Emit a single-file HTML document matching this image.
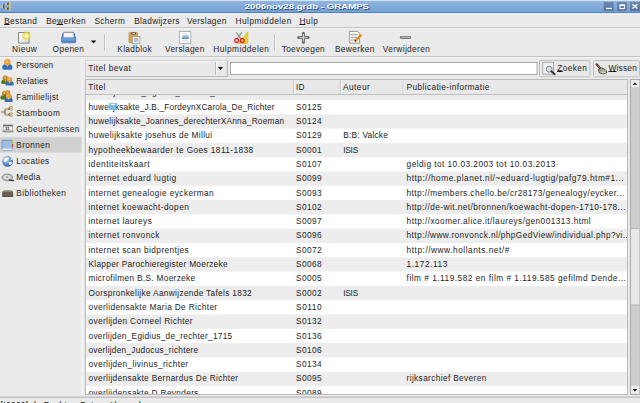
<!DOCTYPE html>
<html><head><meta charset="utf-8"><style>
html,body{margin:0;padding:0;width:640px;height:403px;overflow:hidden;background:#eaeaea}
svg{display:block;font-family:"Liberation Sans",sans-serif}
</style></head><body>
<svg width="640" height="403" viewBox="0 0 640 403">
<rect width="640" height="403" fill="#eaeaea"/>
<defs><linearGradient id="tg" x1="0" y1="0" x2="0" y2="1"><stop offset="0" stop-color="#90b6e1"/><stop offset="1" stop-color="#74a0d3"/></linearGradient><linearGradient id="btn" x1="0" y1="0" x2="0" y2="1"><stop offset="0" stop-color="#6a88ae"/><stop offset="1" stop-color="#56759c"/></linearGradient></defs>
<rect x="0" y="0" width="640" height="1" fill="#d6e4f3"/>
<rect x="0" y="1" width="640" height="11" fill="url(#tg)"/>
<rect x="0" y="12" width="640" height="1" fill="#5282bb"/>
<g stroke="#2a2a2a" stroke-width="0.7" fill="none"><path d="M2.5 6.5H3.9M3.9 4.2V8.6M3.9 4.2H5M3.9 8.6H5M7 4.2H8M8 2.6V5M7 8.6H8M8 7.5V9.6M8 2.6H9M8 5H9M8 7.5H9M8 9.6H9"/></g>
<ellipse cx="1.8" cy="6.5" rx="1.35" ry="0.95" fill="#e6c084"/>
<ellipse cx="5.8" cy="4.2" rx="1.35" ry="0.95" fill="#e6c084"/>
<ellipse cx="5.8" cy="8.6" rx="1.35" ry="0.95" fill="#e6c084"/>
<ellipse cx="9.8" cy="2.6" rx="1.35" ry="0.95" fill="#e6c084"/>
<ellipse cx="9.8" cy="5.0" rx="1.35" ry="0.95" fill="#e6c084"/>
<ellipse cx="9.8" cy="7.5" rx="1.35" ry="0.95" fill="#e6c084"/>
<ellipse cx="9.8" cy="9.7" rx="1.35" ry="0.95" fill="#e6c084"/>
<g transform="translate(245.6 10.3) scale(1.206 1)"><text x="0" y="0" font-size="8" font-weight="bold" fill="#2e4d78">2006nov28.grdb - GRAMPS</text></g>
<g transform="translate(244.7 9.4) scale(1.206 1)"><text x="0" y="0" font-size="8" font-weight="bold" fill="#ffffff">2006nov28.grdb - GRAMPS</text></g>
<rect x="603.7" y="2" width="10" height="9" fill="url(#btn)"/>
<rect x="617" y="2" width="10" height="9" fill="url(#btn)"/>
<rect x="630" y="2" width="10" height="9" fill="url(#btn)"/>
<rect x="606" y="7.8" width="6" height="1.3" fill="#fff"/>
<rect x="620" y="5" width="4.4" height="3.6" fill="none" stroke="#fff" stroke-width="1"/><rect x="619.6" y="4.6" width="5.2" height="1.3" fill="#fff"/>
<path d="M632.3 4.2L637.5 8.6M637.5 4.2L632.3 8.6" stroke="#fff" stroke-width="1.3"/>
<rect x="0" y="13" width="640" height="14" fill="#ebebeb"/>
<rect x="0" y="27" width="640" height="1" fill="#c3c3c3"/>
<rect x="0" y="28" width="640" height="1" fill="#f4f4f4"/>
<text x="4.20" y="23.60" font-size="8.30" fill="#1c1c1c" textLength="32.77" lengthAdjust="spacing">Bestand</text>
<rect x="4.20" y="24" width="5.49" height="1" fill="#1c1c1c"/>
<text x="46.20" y="23.60" font-size="8.30" fill="#1c1c1c" textLength="39.50" lengthAdjust="spacing">Bewerken</text>
<rect x="56.61" y="24" width="6.54" height="1" fill="#1c1c1c"/>
<text x="94.40" y="23.60" font-size="8.30" fill="#1c1c1c" textLength="30.41" lengthAdjust="spacing">Scherm</text>
<text x="134.20" y="23.60" font-size="8.30" fill="#1c1c1c" textLength="45.26" lengthAdjust="spacing">Bladwijzers</text>
<text x="186.90" y="23.60" font-size="8.30" fill="#1c1c1c" textLength="39.43" lengthAdjust="spacing">Verslagen</text>
<text x="235.60" y="23.60" font-size="8.30" fill="#1c1c1c" textLength="55.70" lengthAdjust="spacing">Hulpmiddelen</text>
<text x="299.40" y="23.60" font-size="8.30" fill="#1c1c1c" textLength="18.39" lengthAdjust="spacing">Hulp</text>
<rect x="299.40" y="24" width="6.02" height="1" fill="#1c1c1c"/>
<rect x="0" y="56" width="640" height="1" fill="#c4c4c4"/>
<rect x="0" y="57" width="640" height="1" fill="#f2f2f2"/>
<text x="12.10" y="52.00" font-size="8.30" fill="#1c1c1c" textLength="24.74" lengthAdjust="spacing">Nieuw</text>
<text x="52.60" y="52.00" font-size="8.30" fill="#1c1c1c" textLength="31.36" lengthAdjust="spacing">Openen</text>
<text x="117.30" y="52.00" font-size="8.30" fill="#1c1c1c" textLength="34.28" lengthAdjust="spacing">Kladblok</text>
<text x="165.00" y="52.00" font-size="8.30" fill="#1c1c1c" textLength="39.43" lengthAdjust="spacing">Verslagen</text>
<text x="213.20" y="52.00" font-size="8.30" fill="#1c1c1c" textLength="55.70" lengthAdjust="spacing">Hulpmiddelen</text>
<text x="281.70" y="52.00" font-size="8.30" fill="#1c1c1c" textLength="42.96" lengthAdjust="spacing">Toevoegen</text>
<text x="334.90" y="52.00" font-size="8.30" fill="#1c1c1c" textLength="39.50" lengthAdjust="spacing">Bewerken</text>
<text x="382.70" y="52.00" font-size="8.30" fill="#1c1c1c" textLength="47.16" lengthAdjust="spacing">Verwijderen</text>
<rect x="104.0" y="34" width="1" height="17" fill="#c2c2c2"/><rect x="105.0" y="34" width="1" height="17" fill="#f8f8f8"/>
<rect x="274.0" y="34" width="1" height="17" fill="#c2c2c2"/><rect x="275.0" y="34" width="1" height="17" fill="#f8f8f8"/>
<defs><linearGradient id="docg" x1="0" y1="0" x2="1" y2="1"><stop offset="0" stop-color="#ffffff"/><stop offset="1" stop-color="#d8d8d8"/></linearGradient><radialGradient id="stg"><stop offset="0.4" stop-color="#ffe84a"/><stop offset="1" stop-color="#e8d020" stop-opacity="0.6"/></radialGradient><linearGradient id="blug" x1="0" y1="0" x2="0" y2="1"><stop offset="0" stop-color="#7fb0e6"/><stop offset="1" stop-color="#3f78c0"/></linearGradient></defs>
<rect x="18.5" y="32.5" width="10.6" height="10.6" fill="url(#docg)" stroke="#8a8a8a" stroke-width="1"/>
<circle cx="26.5" cy="35.6" r="4.2" fill="url(#stg)"/>
<path d="M26.5 33.2L27.2 34.9L29 35L27.6 36.1L28.1 37.9L26.5 36.9L24.9 37.9L25.4 36.1L24 35L25.8 34.9Z" fill="#fff"/>
<rect x="63" y="32.3" width="11" height="6.5" rx="1" fill="#f6f6f6" stroke="#7d7d7d" stroke-width="0.9"/>
<path d="M61.5 37.8H75.8V41.6Q75.8 42.8 74.6 42.8H62.7Q61.5 42.8 61.5 41.6Z" fill="url(#blug)" stroke="#3a6aa8" stroke-width="0.6"/>
<path d="M61.8 38.2L63.2 33.5M75.5 38.2L74.1 33.5" stroke="#3a6aa8" stroke-width="1"/>
<path d="M90.8 40.4H96.3L93.55 43.4Z" fill="#111"/>
<rect x="129" y="32.4" width="8.4" height="10.3" rx="0.8" fill="#e1a54c" stroke="#b57a2a" stroke-width="0.6"/>
<rect x="131.2" y="32.4" width="4.8" height="2.2" rx="0.6" fill="#4a4a4a"/><rect x="132.2" y="33" width="2.8" height="0.9" fill="#ddd"/>
<rect x="132.3" y="36.4" width="7.6" height="7" fill="#fafafa" stroke="#8a8a8a" stroke-width="0.7"/>
<rect x="133.8" y="37.8" width="4.5" height="4.3" fill="#bdbdbd"/>
<rect x="179.5" y="31.5" width="11.2" height="12" fill="#fdfdfd" stroke="#b2b2b2" stroke-width="1"/>
<rect x="181.5" y="33" width="7" height="0.6" fill="#d8d8d8"/>
<rect x="182" y="35" width="6.7" height="3.9" fill="#9cc0e6"/><rect x="182" y="37.6" width="6.7" height="1.3" fill="#5f86b8"/><rect x="182.3" y="35.3" width="1.6" height="1.2" fill="#d8e8a0"/>
<rect x="182" y="40.2" width="6.5" height="0.6" fill="#dadada"/><rect x="182" y="41.6" width="6.5" height="0.6" fill="#dadada"/>
<path d="M247.8 31.8V43.6H238.2Z" fill="#f0d030" stroke="#c9a818" stroke-width="0.5"/>
<path d="M236.2 32.3L241.5 39.5M241.8 32.3L236.6 39.5" stroke="#9a9a9a" stroke-width="1.3"/>
<circle cx="236.6" cy="40.6" r="1.9" fill="none" stroke="#e02020" stroke-width="1.3"/><circle cx="242.3" cy="40.6" r="1.9" fill="none" stroke="#e02020" stroke-width="1.3"/>
<path d="M303.4 33.2V42.2M298.6 37.6H308.2" stroke="#6a6a6a" stroke-width="3" stroke-linecap="round"/>
<path d="M303.4 34V41.4M299.4 37.6H307.4" stroke="#d8d8d8" stroke-width="1"/>
<path d="M349.6 31.4H357.6L359.6 33.4V43.1H349.6Z" fill="#f7f7f7" stroke="#8c8c8c" stroke-width="0.9"/>
<rect x="351" y="34.3" width="6.5" height="0.9" fill="#9a9a9a"/>
<rect x="351" y="36.9" width="6.5" height="0.9" fill="#9a9a9a"/>
<rect x="351" y="39.5" width="6.5" height="0.9" fill="#9a9a9a"/>
<path d="M355.4 40.8L360.8 35.4" stroke="#f08a10" stroke-width="2.2" stroke-linecap="round"/><path d="M355 41.2L355.9 40.3" stroke="#333" stroke-width="1.6"/>
<rect x="399.8" y="36" width="11.4" height="2.9" rx="1.4" fill="#7a7a7a"/><rect x="401" y="36.8" width="9" height="0.9" fill="#cfcfcf"/>
<rect x="81.5" y="57" width="1" height="340" fill="#f7f7f7"/>
<rect x="0" y="137.2" width="81.6" height="15.4" fill="#d0d0d0"/>
<text x="16.30" y="67.70" font-size="8.30" fill="#1c1c1c" textLength="36.88" lengthAdjust="spacing">Personen</text>
<text x="16.30" y="83.70" font-size="8.30" fill="#1c1c1c" textLength="31.70" lengthAdjust="spacing">Relaties</text>
<text x="16.30" y="99.70" font-size="8.30" fill="#1c1c1c" textLength="42.12" lengthAdjust="spacing">Familielijst</text>
<text x="16.30" y="115.70" font-size="8.30" fill="#1c1c1c" textLength="43.57" lengthAdjust="spacing">Stamboom</text>
<text x="16.30" y="131.70" font-size="8.30" fill="#1c1c1c" textLength="63.16" lengthAdjust="spacing">Gebeurtenissen</text>
<text x="16.30" y="147.70" font-size="8.30" fill="#1c1c1c" textLength="33.63" lengthAdjust="spacing">Bronnen</text>
<text x="16.30" y="163.70" font-size="8.30" fill="#1c1c1c" textLength="32.96" lengthAdjust="spacing">Locaties</text>
<text x="16.30" y="179.70" font-size="8.30" fill="#1c1c1c" textLength="24.03" lengthAdjust="spacing">Media</text>
<text x="16.30" y="195.70" font-size="8.30" fill="#1c1c1c" textLength="49.60" lengthAdjust="spacing">Bibliotheken</text>
<path d="M2.20 68.10Q2.20 64.30 4.80 64.30H9.80Q12.40 64.30 12.40 68.10Q12.40 69.70 10.80 69.70H3.80Q2.20 69.70 2.20 68.10Z" fill="#336fb8"/><path d="M6.30 64.30L7.30 66.90L8.30 64.30Z" fill="#e8eef6"/><circle cx="7.30" cy="62.30" r="3.30" fill="#eba33a"/><circle cx="6.90" cy="61.70" r="1.40" fill="#f6c873" opacity="0.6"/>
<path d="M1.22 82.84Q1.22 79.80 3.30 79.80H7.30Q9.38 79.80 9.38 82.84Q9.38 84.12 8.10 84.12H2.50Q1.22 84.12 1.22 82.84Z" fill="#4e7a1c"/><path d="M4.50 79.80L5.30 81.88L6.10 79.80Z" fill="#e8eef6"/><circle cx="5.30" cy="78.20" r="2.64" fill="#c0862c"/><circle cx="4.98" cy="77.72" r="1.12" fill="#f6c873" opacity="0.6"/>
<path d="M5.52 84.24Q5.52 81.20 7.60 81.20H11.60Q13.68 81.20 13.68 84.24Q13.68 85.52 12.40 85.52H6.80Q5.52 85.52 5.52 84.24Z" fill="#336fb8"/><path d="M8.80 81.20L9.60 83.28L10.40 81.20Z" fill="#e8eef6"/><circle cx="9.60" cy="79.60" r="2.64" fill="#eba33a"/><circle cx="9.28" cy="79.12" r="1.12" fill="#f6c873" opacity="0.6"/>
<path d="M0.42 98.24Q0.42 95.20 2.50 95.20H6.50Q8.58 95.20 8.58 98.24Q8.58 99.52 7.30 99.52H1.70Q0.42 99.52 0.42 98.24Z" fill="#4e7a1c"/><path d="M3.70 95.20L4.50 97.28L5.30 95.20Z" fill="#e8eef6"/><circle cx="4.50" cy="93.60" r="2.64" fill="#c0862c"/><circle cx="4.18" cy="93.12" r="1.12" fill="#f6c873" opacity="0.6"/>
<path d="M3.52 97.24Q3.52 94.20 5.60 94.20H9.60Q11.68 94.20 11.68 97.24Q11.68 98.52 10.40 98.52H4.80Q3.52 98.52 3.52 97.24Z" fill="#4e7a1c"/><path d="M6.80 94.20L7.60 96.28L8.40 94.20Z" fill="#e8eef6"/><circle cx="7.60" cy="92.60" r="2.64" fill="#cc9030"/><circle cx="7.28" cy="92.12" r="1.12" fill="#f6c873" opacity="0.6"/>
<path d="M4.52 100.84Q4.52 97.80 6.60 97.80H10.60Q12.68 97.80 12.68 100.84Q12.68 102.12 11.40 102.12H5.80Q4.52 102.12 4.52 100.84Z" fill="#336fb8"/><path d="M7.80 97.80L8.60 99.88L9.40 97.80Z" fill="#e8eef6"/><circle cx="8.60" cy="96.20" r="2.64" fill="#eba33a"/><circle cx="8.28" cy="95.72" r="1.12" fill="#f6c873" opacity="0.6"/>
<path d="M3.5 112H5M5 109.3V114.7M5 109.3H6M5 114.7H6M7.5 109.3H9M9 107.4V109.4M7.5 114.7H9M9 113.5V115.6M9 107.4H10M9 109.4H10M9 113.5H10M9 115.6H10" stroke="#333" stroke-width="0.8" fill="none"/>
<ellipse cx="2.4" cy="112" rx="1.6" ry="1.05" fill="#e4bf82" stroke="#9c8050" stroke-width="0.3"/>
<ellipse cx="6.8" cy="109.3" rx="1.6" ry="1.05" fill="#e4bf82" stroke="#9c8050" stroke-width="0.3"/>
<ellipse cx="6.8" cy="114.7" rx="1.6" ry="1.05" fill="#e4bf82" stroke="#9c8050" stroke-width="0.3"/>
<ellipse cx="11.2" cy="107.4" rx="1.6" ry="1.05" fill="#e4bf82" stroke="#9c8050" stroke-width="0.3"/>
<ellipse cx="11.2" cy="109.5" rx="1.6" ry="1.05" fill="#e4bf82" stroke="#9c8050" stroke-width="0.3"/>
<ellipse cx="11.2" cy="113.5" rx="1.6" ry="1.05" fill="#e4bf82" stroke="#9c8050" stroke-width="0.3"/>
<ellipse cx="11.2" cy="115.7" rx="1.6" ry="1.05" fill="#e4bf82" stroke="#9c8050" stroke-width="0.3"/>
<rect x="3.2" y="125" width="9.5" height="6" fill="#f4f4f4" stroke="#8a8a8a" stroke-width="0.6"/><rect x="3.2" y="124.8" width="9.5" height="1.6" fill="#6e6e6e"/><rect x="2.4" y="130.6" width="11" height="1.8" rx="0.6" fill="#9c9c9c"/><text x="5" y="130.2" font-size="4.2" font-weight="bold" fill="#2a2a2a">31</text>
<rect x="2" y="140.3" width="10.4" height="10.3" rx="1" fill="#9dbde3" stroke="#5c7eb0" stroke-width="0.7"/><rect x="2.4" y="148.5" width="9.8" height="1.8" fill="#e8eef8"/><rect x="12.2" y="141" width="1" height="3" fill="#c8d040"/><rect x="12.2" y="144" width="1" height="3" fill="#e03030"/>
<defs><radialGradient id="glb" cx="0.4" cy="0.35" r="0.75"><stop offset="0" stop-color="#b8d4f4"/><stop offset="0.6" stop-color="#4f86cc"/><stop offset="1" stop-color="#2a5aa0"/></radialGradient></defs><circle cx="7.6" cy="161.4" r="5.3" fill="url(#glb)"/><path d="M3.4 159.6Q5.5 156.4 9.4 157.4Q9 160.2 6.8 160.8Q5.8 162.8 4 161.8Z" fill="#f2f5fa"/><path d="M8.8 162Q11.6 161 12.2 163.2Q10.6 165.6 9 164.6Z" fill="#f2f5fa"/><path d="M10.4 157.6Q12.2 158.4 12.6 160.2L11 159.6Z" fill="#f2f5fa"/>
<ellipse cx="7.2" cy="177.4" rx="5.3" ry="3.4" fill="#c4c4c4" stroke="#6e6e6e" stroke-width="0.7"/><ellipse cx="7.2" cy="177" rx="3.2" ry="1.8" fill="#e6e6e6"/><ellipse cx="7.2" cy="177" rx="1.4" ry="0.8" fill="#8a8a8a"/><path d="M8.8 180.2L14.2 180.6" stroke="#2e2e2e" stroke-width="1.2"/>
<path d="M2.2 193.4Q2.4 190.6 4.6 190.6H10.8Q13 190.6 13.2 193.4V197H2.2Z" fill="#5e574a"/><rect x="2.6" y="191" width="10.2" height="1.4" fill="#8c8574"/><rect x="2.2" y="194.2" width="11" height="0.7" fill="#7a7262"/>
<rect x="85.5" y="60.5" width="141.5" height="16" fill="#e9e9e9" stroke="#d2d2d2" stroke-width="1"/>
<rect x="86" y="61" width="140.5" height="1" fill="#f8f8f8"/>
<rect x="85" y="76" width="143" height="1" fill="#bcbcbc"/><rect x="227" y="61" width="1" height="16" fill="#bcbcbc"/>
<rect x="215.2" y="62" width="1" height="13" fill="#b0b0b0"/><rect x="216.2" y="62" width="1" height="13" fill="#f8f8f8"/>
<path d="M217.8 66.9H223.1L220.45 70.1Z" fill="#111"/>
<text x="88.30" y="70.90" font-size="8.30" fill="#1c1c1c" textLength="42.46" lengthAdjust="spacing">Titel bevat</text>
<rect x="230.5" y="62.5" width="306.5" height="12" fill="#ffffff" stroke="#a8a8a8" stroke-width="1"/>
<rect x="539.5" y="60.5" width="50.5" height="16" rx="1" fill="#e8e8e8" stroke="#c0c0c0" stroke-width="1"/>
<rect x="540" y="76.5" width="50" height="1" fill="#d6d6d6"/>
<rect x="593.5" y="60.5" width="46" height="16" rx="1" fill="#e8e8e8" stroke="#c0c0c0" stroke-width="1"/>
<rect x="594" y="76.5" width="46" height="1" fill="#d6d6d6"/>
<rect x="542.8" y="62.4" width="10.6" height="11.8" fill="#f3f3f3" stroke="#9a9a9a" stroke-width="0.8"/>
<circle cx="549.2" cy="69.2" r="3" fill="#cfe0f2" stroke="#777" stroke-width="0.9"/><path d="M551.3 71.3L554.8 74.2" stroke="#333" stroke-width="1.8" stroke-linecap="round"/>
<text x="557.20" y="70.90" font-size="8.30" fill="#1c1c1c" textLength="29.64" lengthAdjust="spacing">Zoeken</text>
<rect x="557.20" y="71" width="5.48" height="1" fill="#1c1c1c"/>
<path d="M596.6 64.3L600.2 68.4" stroke="#4a3420" stroke-width="2.2" stroke-linecap="round"/><path d="M596.7 64.5L600 68.2" stroke="#9a7450" stroke-width="1"/>
<path d="M598.3 69.6L601.6 67.7L605.6 69.8L607 72.6L603 74L599.2 72.8Z" fill="#98ae8e" stroke="#2e2e2e" stroke-width="0.7"/>
<path d="M600.2 72.2L603.8 70.9L606.2 72.6L603 73.5Z" fill="#dccb8c"/>
<path d="M606.3 67.8L605.6 71" stroke="#c8c8c8" stroke-width="0.8"/>
<text x="608.50" y="71.00" font-size="8.30" fill="#1c1c1c" textLength="28.29" lengthAdjust="spacing">Wissen</text>
<rect x="608.50" y="71" width="7.91" height="1" fill="#1c1c1c"/>
<rect x="85.5" y="79.5" width="542" height="315" fill="#fff" stroke="#bababa" stroke-width="1"/>
<svg x="86" y="80" width="541" height="314" overflow="hidden">
<rect x="0" y="5.70" width="543" height="14.30" fill="#ededed"/>
<text x="2.50" y="15.40" font-size="8.30" fill="#1c1c1c" textLength="145.65" lengthAdjust="spacing">huwelijksakte_Egidius_Scheire_1773</text>
<text x="210.10" y="15.40" font-size="8.30" fill="#1c1c1c" textLength="25.44" lengthAdjust="spacing">S0016</text>
<text x="2.50" y="29.70" font-size="8.30" fill="#1c1c1c" textLength="185.96" lengthAdjust="spacing">huwelijksakte_J.B._FordeynXCarola_De_Richter</text>
<text x="210.10" y="29.70" font-size="8.30" fill="#1c1c1c" textLength="25.44" lengthAdjust="spacing">S0125</text>
<rect x="0" y="34.30" width="543" height="14.30" fill="#ededed"/>
<text x="2.50" y="44.00" font-size="8.30" fill="#1c1c1c" textLength="195.68" lengthAdjust="spacing">huwelijksakte_Joannes_derechterXAnna_Roeman</text>
<text x="210.10" y="44.00" font-size="8.30" fill="#1c1c1c" textLength="25.44" lengthAdjust="spacing">S0124</text>
<text x="2.50" y="58.30" font-size="8.30" fill="#1c1c1c" textLength="123.68" lengthAdjust="spacing">huwelijksakte josehus de Millui</text>
<text x="210.10" y="58.30" font-size="8.30" fill="#1c1c1c" textLength="25.44" lengthAdjust="spacing">S0129</text>
<text x="257.30" y="58.30" font-size="8.30" fill="#1c1c1c" textLength="44.55" lengthAdjust="spacing">B:B: Valcke</text>
<rect x="0" y="62.90" width="543" height="14.30" fill="#ededed"/>
<text x="2.50" y="72.60" font-size="8.30" fill="#1c1c1c" textLength="164.72" lengthAdjust="spacing">hypotheekbewaarder te Goes 1811-1838</text>
<text x="210.10" y="72.60" font-size="8.30" fill="#1c1c1c" textLength="25.44" lengthAdjust="spacing">S0001</text>
<text x="257.30" y="72.60" font-size="8.30" fill="#1c1c1c" textLength="14.88" lengthAdjust="spacing">ISIS</text>
<text x="2.50" y="86.90" font-size="8.30" fill="#1c1c1c" textLength="60.96" lengthAdjust="spacing">identiteitskaart</text>
<text x="210.10" y="86.90" font-size="8.30" fill="#1c1c1c" textLength="25.44" lengthAdjust="spacing">S0107</text>
<text x="320.60" y="86.90" font-size="8.30" fill="#1c1c1c" textLength="148.72" lengthAdjust="spacing">geldig tot 10.03.2003 tot 10.03.2013</text>
<rect x="0" y="91.50" width="543" height="14.30" fill="#ededed"/>
<text x="2.50" y="101.20" font-size="8.30" fill="#1c1c1c" textLength="87.72" lengthAdjust="spacing">internet eduard lugtig</text>
<text x="210.10" y="101.20" font-size="8.30" fill="#1c1c1c" textLength="25.44" lengthAdjust="spacing">S0099</text>
<text x="320.60" y="101.20" font-size="8.30" fill="#1c1c1c" textLength="216.91" lengthAdjust="spacing">http://home.planet.nl/~eduard-lugtig/pafg79.htm#1...</text>
<text x="2.50" y="115.50" font-size="8.30" fill="#1c1c1c" textLength="125.19" lengthAdjust="spacing">internet genealogie eyckerman</text>
<text x="210.10" y="115.50" font-size="8.30" fill="#1c1c1c" textLength="25.44" lengthAdjust="spacing">S0093</text>
<text x="320.60" y="115.50" font-size="8.30" fill="#1c1c1c" textLength="217.70" lengthAdjust="spacing">http://members.chello.be/cr28173/genealogy/eycker...</text>
<rect x="0" y="120.10" width="543" height="14.30" fill="#ededed"/>
<text x="2.50" y="129.80" font-size="8.30" fill="#1c1c1c" textLength="100.32" lengthAdjust="spacing">internet koewacht-dopen</text>
<text x="210.10" y="129.80" font-size="8.30" fill="#1c1c1c" textLength="25.44" lengthAdjust="spacing">S0102</text>
<text x="320.60" y="129.80" font-size="8.30" fill="#1c1c1c" textLength="218.75" lengthAdjust="spacing">http://de-wit.net/bronnen/koewacht-dopen-1710-178...</text>
<text x="2.50" y="144.10" font-size="8.30" fill="#1c1c1c" textLength="63.30" lengthAdjust="spacing">internet laureys</text>
<text x="210.10" y="144.10" font-size="8.30" fill="#1c1c1c" textLength="25.44" lengthAdjust="spacing">S0097</text>
<text x="320.60" y="144.10" font-size="8.30" fill="#1c1c1c" textLength="184.07" lengthAdjust="spacing">http://xoomer.alice.it/laureys/gen001313.html</text>
<rect x="0" y="148.70" width="543" height="14.30" fill="#ededed"/>
<text x="2.50" y="158.40" font-size="8.30" fill="#1c1c1c" textLength="70.98" lengthAdjust="spacing">internet ronvonck</text>
<text x="210.10" y="158.40" font-size="8.30" fill="#1c1c1c" textLength="25.44" lengthAdjust="spacing">S0096</text>
<text x="320.60" y="158.40" font-size="8.30" fill="#1c1c1c" textLength="223.82" lengthAdjust="spacing">http://www.ronvonck.nl/phpGedView/individual.php?vi...</text>
<text x="2.50" y="172.70" font-size="8.30" fill="#1c1c1c" textLength="100.27" lengthAdjust="spacing">internet scan bidprentjes</text>
<text x="210.10" y="172.70" font-size="8.30" fill="#1c1c1c" textLength="25.44" lengthAdjust="spacing">S0072</text>
<text x="320.60" y="172.70" font-size="8.30" fill="#1c1c1c" textLength="102.70" lengthAdjust="spacing">http://www.hollants.net/#</text>
<rect x="0" y="177.30" width="543" height="14.30" fill="#ededed"/>
<text x="2.50" y="187.00" font-size="8.30" fill="#1c1c1c" textLength="139.06" lengthAdjust="spacing">Klapper Parochieregister Moerzeke</text>
<text x="210.10" y="187.00" font-size="8.30" fill="#1c1c1c" textLength="25.44" lengthAdjust="spacing">S0068</text>
<text x="320.60" y="187.00" font-size="8.30" fill="#1c1c1c" textLength="40.71" lengthAdjust="spacing">1.172.113</text>
<text x="2.50" y="201.30" font-size="8.30" fill="#1c1c1c" textLength="106.61" lengthAdjust="spacing">microfilmen B.S. Moerzeke</text>
<text x="210.10" y="201.30" font-size="8.30" fill="#1c1c1c" textLength="25.44" lengthAdjust="spacing">S0005</text>
<text x="320.60" y="201.30" font-size="8.30" fill="#1c1c1c" textLength="219.20" lengthAdjust="spacing">film # 1.119.582 en film # 1.119.585 gefilmd Dende...</text>
<rect x="0" y="205.90" width="543" height="14.30" fill="#ededed"/>
<text x="2.50" y="215.60" font-size="8.30" fill="#1c1c1c" textLength="163.22" lengthAdjust="spacing">Oorspronkelijke Aanwijzende Tafels 1832</text>
<text x="210.10" y="215.60" font-size="8.30" fill="#1c1c1c" textLength="25.44" lengthAdjust="spacing">S0002</text>
<text x="257.30" y="215.60" font-size="8.30" fill="#1c1c1c" textLength="14.88" lengthAdjust="spacing">ISIS</text>
<text x="2.50" y="229.90" font-size="8.30" fill="#1c1c1c" textLength="128.64" lengthAdjust="spacing">overlidensakte Maria De Richter</text>
<text x="210.10" y="229.90" font-size="8.30" fill="#1c1c1c" textLength="25.44" lengthAdjust="spacing">S0110</text>
<rect x="0" y="234.50" width="543" height="14.30" fill="#ededed"/>
<text x="2.50" y="244.20" font-size="8.30" fill="#1c1c1c" textLength="104.03" lengthAdjust="spacing">overlijden Corneel Richter</text>
<text x="210.10" y="244.20" font-size="8.30" fill="#1c1c1c" textLength="25.44" lengthAdjust="spacing">S0132</text>
<text x="2.50" y="258.50" font-size="8.30" fill="#1c1c1c" textLength="143.68" lengthAdjust="spacing">overlijden_Egidius_de_rechter_1715</text>
<text x="210.10" y="258.50" font-size="8.30" fill="#1c1c1c" textLength="25.44" lengthAdjust="spacing">S0136</text>
<rect x="0" y="263.10" width="543" height="14.30" fill="#ededed"/>
<text x="2.50" y="272.80" font-size="8.30" fill="#1c1c1c" textLength="109.69" lengthAdjust="spacing">overlijden_Judocus_richtere</text>
<text x="210.10" y="272.80" font-size="8.30" fill="#1c1c1c" textLength="25.44" lengthAdjust="spacing">S0106</text>
<text x="2.50" y="287.10" font-size="8.30" fill="#1c1c1c" textLength="99.62" lengthAdjust="spacing">overlijden_livinus_richter</text>
<text x="210.10" y="287.10" font-size="8.30" fill="#1c1c1c" textLength="25.44" lengthAdjust="spacing">S0134</text>
<rect x="0" y="291.70" width="543" height="14.30" fill="#ededed"/>
<text x="2.50" y="301.40" font-size="8.30" fill="#1c1c1c" textLength="149.64" lengthAdjust="spacing">overlijdensakte Bernardus De Richter</text>
<text x="210.10" y="301.40" font-size="8.30" fill="#1c1c1c" textLength="25.44" lengthAdjust="spacing">S0095</text>
<text x="320.60" y="301.40" font-size="8.30" fill="#1c1c1c" textLength="79.70" lengthAdjust="spacing">rijksarchief Beveren</text>
<text x="2.50" y="315.70" font-size="8.30" fill="#1c1c1c" textLength="109.97" lengthAdjust="spacing">overlijdensakte D Reynders</text>
<text x="210.10" y="315.70" font-size="8.30" fill="#1c1c1c" textLength="25.44" lengthAdjust="spacing">S0089</text>
<rect x="0" y="0" width="543" height="14" fill="#e8e8e8"/>
<rect x="0" y="14" width="543" height="1" fill="#bdbdbd"/>
<rect x="206.90" y="0" width="1" height="14" fill="#c4c4c4"/><rect x="207.90" y="0" width="1" height="14" fill="#f4f4f4"/>
<rect x="253.80" y="0" width="1" height="14" fill="#c4c4c4"/><rect x="254.80" y="0" width="1" height="14" fill="#f4f4f4"/>
<rect x="316.60" y="0" width="1" height="14" fill="#c4c4c4"/><rect x="317.60" y="0" width="1" height="14" fill="#f4f4f4"/>
<text x="2.30" y="9.60" font-size="8.30" fill="#1c1c1c" textLength="17.14" lengthAdjust="spacing">Titel</text>
<text x="209.90" y="9.60" font-size="8.30" fill="#1c1c1c" textLength="8.52" lengthAdjust="spacing">ID</text>
<text x="256.90" y="9.60" font-size="8.30" fill="#1c1c1c" textLength="26.96" lengthAdjust="spacing">Auteur</text>
<text x="320.50" y="9.60" font-size="8.30" fill="#1c1c1c" textLength="82.88" lengthAdjust="spacing">Publicatie-informatie</text>
</svg>
<rect x="630" y="79" width="10" height="316" fill="#cecece"/>
<rect x="630" y="79" width="1" height="316" fill="#a9a9a9"/><rect x="630" y="79" width="10" height="1" fill="#a9a9a9"/><rect x="630" y="394" width="10" height="1" fill="#a9a9a9"/><rect x="639" y="80" width="1" height="314" fill="#c4c4c4"/>
<rect x="631" y="80" width="8" height="7.2" fill="#ececec"/><path d="M632.6 84.8H637.3L634.95 82.6Z" fill="#111"/>
<rect x="631" y="386" width="8" height="8" fill="#ececec"/><path d="M632.8 389H637.1L634.95 391.6Z" fill="#111"/>
<rect x="631" y="228.5" width="8" height="76.5" fill="#e8e8e8"/><rect x="631" y="228" width="8" height="1" fill="#b4b4b4"/><rect x="631" y="304.5" width="8" height="1" fill="#b4b4b4"/>
<rect x="0" y="396" width="640" height="1" fill="#d4d4d4"/><rect x="0" y="397" width="640" height="1" fill="#c2c2c2"/>
<text x="0.60" y="407.50" font-size="8.30" fill="#1c1c1c" textLength="148.21" lengthAdjust="spacing">[I0000] de Rechter, Petrus Alexander</text>
</svg>
</body></html>
